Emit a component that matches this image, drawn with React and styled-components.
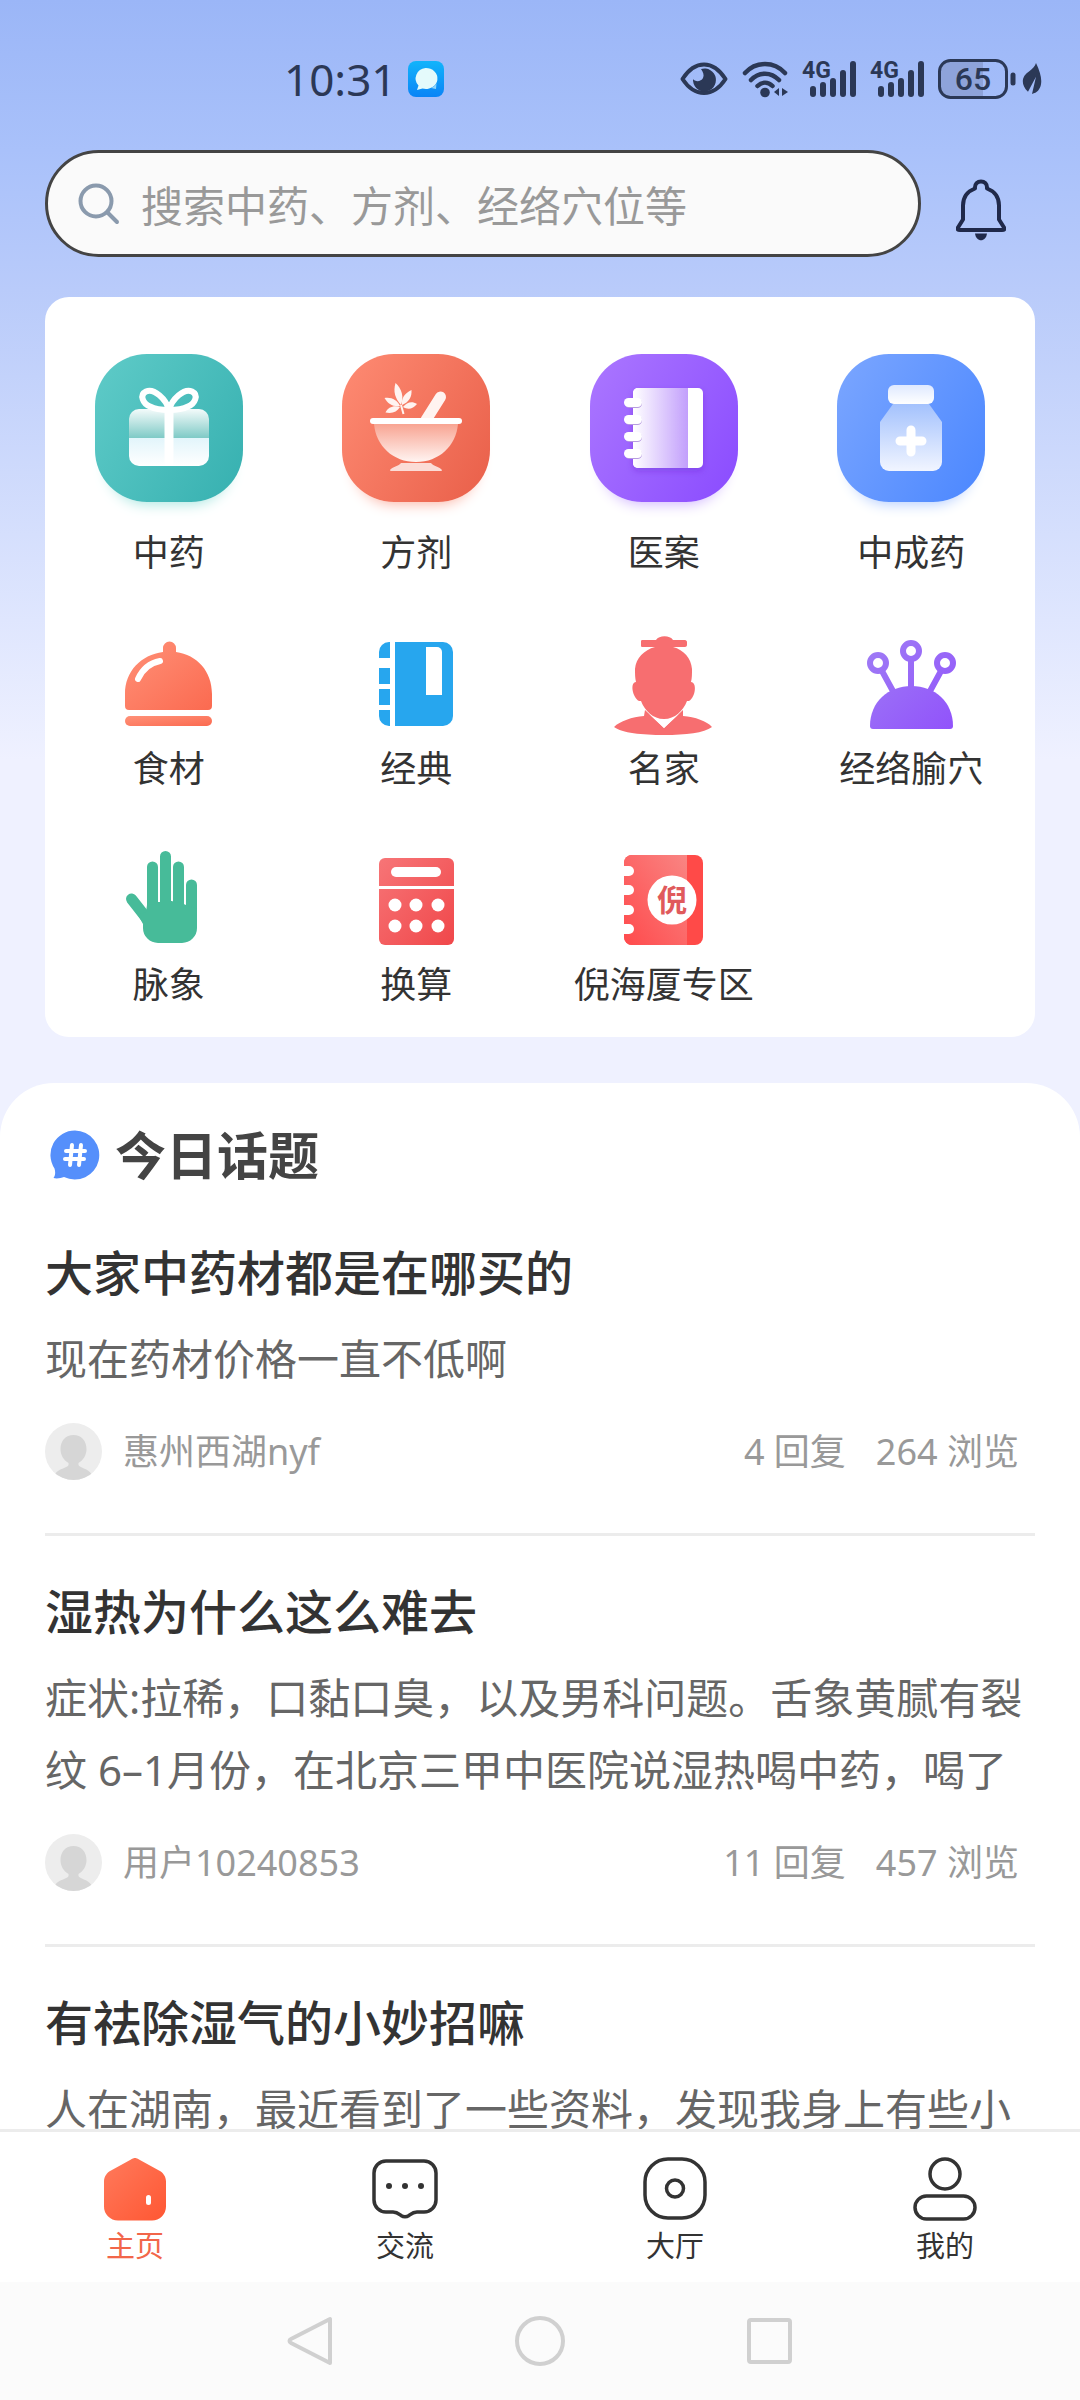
import React from 'react';
import styled, { createGlobalStyle } from 'styled-components';

const GlobalStyle = createGlobalStyle`
  * {
    box-sizing: border-box;
  }
  body {
    margin: 0;
    font-family: 'Noto Sans', 'Noto Sans CJK SC', sans-serif;
    color: #333;
  }
  a {
    color: inherit;
    text-decoration: none;
  }
  svg {
    display: block;
    flex-shrink: 0;
  }
`;

const Page = styled.div`
  height: 100vh;
  display: flex;
  flex-direction: column;
  background: linear-gradient(#9bb6f7 0, #a9c1fa 150px, #b9cbfa 290px, #dfe6fe 620px, #eff1ff 760px);
`;

const StatusBar = styled.header`
  height: 150px;
  flex-shrink: 0;
  display: flex;
  align-items: center;
  justify-content: space-between;
  padding: 8px 38px 0 284px;
  color: #2b3856;
`;

const StatusGroup = styled.div`
  display: flex;
  align-items: center;
  gap: ${({ $gap }) => $gap || '14px'};
`;

const Clock = styled.time`
  font-size: 44px;
  line-height: 48px;
`;

const Content = styled.main`
  flex: 1;
  min-height: 0;
  overflow-y: auto;
  scrollbar-width: none;
`;

const SearchRow = styled.div`
  display: flex;
  align-items: center;
  gap: 35px;
  padding: 0 74px 0 45px;
`;

const SearchBox = styled.label`
  flex: 1;
  height: 107px;
  display: flex;
  align-items: center;
  gap: 21px;
  padding: 0 30px;
  border: 3px solid #444;
  border-radius: 54px;
  background: #fafafa;
`;

const SearchInput = styled.input`
  flex: 1;
  min-width: 0;
  border: 0;
  padding: 0;
  outline: none;
  background: transparent;
  font-family: 'Noto Sans CJK SC', sans-serif;
  font-size: 42px;
  line-height: 60px;
  color: #333;
  &::placeholder {
    color: #999;
    opacity: 1;
  }
`;

const IconButton = styled.button`
  display: flex;
  border: 0;
  padding: 0;
  background: none;
  color: inherit;
`;

const BellButton = styled(IconButton)`
  padding-top: 12px;
`;

const MenuCard = styled.nav`
  margin: 40px 45px 46px;
  padding: 57px 0 28px;
  display: grid;
  grid-template-columns: repeat(4, 1fr);
  row-gap: 55px;
  border-radius: 24px;
  background: #fff;
`;

const MenuItem = styled.a`
  display: flex;
  flex-direction: column;
  align-items: center;
  gap: ${({ $large }) => ($large ? '27px' : '9px')};
  font-size: 36px;
  line-height: 48px;
  white-space: nowrap;
`;

const Tile = styled.span`
  width: 148px;
  height: 148px;
  border-radius: 52px;
  background: ${({ $bg }) => $bg};
  box-shadow: 0 14px 14px -12px ${({ $glow }) => $glow};
`;

const Sheet = styled.section`
  padding: 36px 45px 0;
  border-radius: 54px 54px 0 0;
  background: #fff;
`;

const SheetHeading = styled.h1`
  display: flex;
  align-items: center;
  gap: 14px;
  margin: 0 0 6px;
  padding-left: 4px;
  font-size: 51px;
  line-height: 72px;
  font-weight: 700;
  color: #444;
`;

const Post = styled.article`
  padding: 44px 0 53px;
  border-bottom: 3px solid #ececec;
`;

const PostTitle = styled.h2`
  margin: 0 0 18px;
  font-size: 48px;
  line-height: 64px;
  font-weight: 500;
`;

const PostBody = styled.p`
  margin: 0 0 28px;
  font-size: 42px;
  line-height: 72px;
  color: #666;
`;

const PostMeta = styled.div`
  display: flex;
  align-items: center;
  padding-right: 16px;
  font-size: 36px;
  line-height: 57px;
  color: #999;
`;

const Author = styled.span`
  flex: 1;
  margin-left: 21px;
`;

const Stat = styled.span`
  margin-left: 30px;
`;

const TabBar = styled.nav`
  position: relative;
  flex-shrink: 0;
  display: grid;
  grid-template-columns: repeat(4, 1fr);
  padding: 25px 0 16px;
  border-top: 3px solid #ececec;
  background: #fff;
`;

const Tab = styled.a`
  display: flex;
  flex-direction: column;
  align-items: center;
  gap: 5px;
  font-size: 29px;
  line-height: 40px;
  color: ${({ $active }) => ($active ? '#f2664a' : '#333')};
`;

const SystemNav = styled.footer`
  flex-shrink: 0;
  height: 118px;
  display: flex;
  align-items: center;
  justify-content: center;
  gap: 178px;
  background: #fbfbfb;
  color: #d0d0d0;
`;

/* ---------- status bar icons ---------- */

const MessageAppIcon = () => (
  <svg width="36" height="36" viewBox="0 0 36 36">
    <defs>
      <linearGradient id="msg" x1="0" y1="0" x2="0" y2="1">
        <stop offset="0" stopColor="#12b4fb" />
        <stop offset="1" stopColor="#0a84f6" />
      </linearGradient>
    </defs>
    <rect width="36" height="36" rx="8" fill="url(#msg)" />
    <path d="M17.500 7a11.500 10.500 0 1 1-3 20.500L9 29l1.500-4.500A11 10.500 0 0 1 17.500 7z" fill="#e4fafb" />
    <path d="M23 27c3-1 5-3 5.500-5L28 28z" fill="#8fd6fb" />
  </svg>
);

const EyeIcon = () => (
  <svg width="48" height="34" viewBox="0 0 48 34">
    <path
      d="M2.500 17C9 7 16 2.500 24 2.500S39 7 45.500 17C39 27 32 31 24 31S9 27 2.500 17z"
      fill="none"
      stroke="currentColor"
      strokeWidth="4"
      strokeLinejoin="round"
    />
    <path d="M21 7a11.500 11.500 0 1 1-8 10c2 3 8 3 10-1 1.500-3 0-6-2-9z" fill="currentColor" />
  </svg>
);

const WifiIcon = () => (
  <svg width="46" height="38" viewBox="0 0 46 38" fill="none" stroke="currentColor" strokeWidth="4.500" strokeLinecap="round">
    <path d="M3 13C14 1 32 1 43 13M9 20c8-8.500 20-8.500 28 0M15.500 26c4.500-4.500 10.500-4.500 15 0" />
    <circle cx="23" cy="32.500" r="4.800" fill="currentColor" stroke="none" />
    <path d="M37 28v8l-5-4zM40 28v8l6-4z" fill="currentColor" stroke="none" />
  </svg>
);

const SignalIcon = () => (
  <svg width="54" height="38" viewBox="0 0 54 38">
    <text x="0" y="18" fontFamily="Roboto, sans-serif" fontWeight="700" fontSize="23" fill="currentColor">4G</text>
    <g stroke="currentColor" strokeWidth="6" strokeLinecap="round">
      <path d="M11 29v5M21 25v9M31 21v13M41 13v21M51 4v30" />
    </g>
  </svg>
);

const BatteryIcon = () => (
  <svg width="78" height="40" viewBox="0 0 78 40">
    <path d="M12 2h33v36H12A10 10 0 0 1 2 28V12A10 10 0 0 1 12 2z" fill="#8ea3da" />
    <rect x="1.500" y="1.500" width="67" height="37" rx="11" fill="none" stroke="currentColor" strokeWidth="3" />
    <path d="M75 16v8" stroke="currentColor" strokeWidth="5" strokeLinecap="round" />
    <text x="35" y="31" textAnchor="middle" fontFamily="Roboto, sans-serif" fontWeight="500" fontSize="32" fill="currentColor">65</text>
  </svg>
);

const LeafIcon = () => (
  <svg width="20" height="32" viewBox="0 0 20 30" preserveAspectRatio="none">
    <path d="M14 0c4 8 6 14 5 20-1 5-4 8-9 9l4-16L6 27C-2 20 0 12 7 8c4-3 6-5 7-8z" fill="currentColor" />
  </svg>
);

/* ---------- search row ---------- */

const SearchIcon = () => (
  <svg width="42" height="42" viewBox="0 0 42 42" fill="none" stroke="#8a9aad" strokeWidth="4" strokeLinecap="round">
    <circle cx="18" cy="18" r="15.500" />
    <path d="M30 30l9 9" />
  </svg>
);

const BellIcon = () => (
  <svg width="50" height="62" viewBox="0 0 50 62">
    <path
      d="M19 9.500C18 0 32 0 31 9.500c8 3 12 9 12 17v14l5 8c1 2 0 2.500-2 2.500H4c-2 0-3-.500-2-2.500l5-8V26.500C7 18.500 11 12.500 19 9.500z"
      fill="none"
      stroke="#20294a"
      strokeWidth="4"
      strokeLinejoin="round"
    />
    <path d="M19 54.500h12c-1 9-11 9-12 0z" fill="#20294a" />
  </svg>
);

/* ---------- large menu tiles ---------- */

const GiftIcon = () => (
  <svg width="148" height="148" viewBox="0 0 148 148">
    <defs>
      <linearGradient id="giftTop" x1="0" y1="0" x2="0" y2="1">
        <stop offset="0" stopColor="#f4fbfb" />
        <stop offset="1" stopColor="#7fcac6" />
      </linearGradient>
      <linearGradient id="giftBottom" x1="0" y1="0" x2="0" y2="1">
        <stop offset="0" stopColor="#e2f5fb" />
        <stop offset="1" stopColor="#fff" />
      </linearGradient>
    </defs>
    <path d="M34 84V65a10 10 0 0 1 10-10h60a10 10 0 0 1 10 10v19z" fill="url(#giftTop)" />
    <path d="M34 84h80v18a10 10 0 0 1-10 10H44a10 10 0 0 1-10-10z" fill="url(#giftBottom)" />
    <path d="M74 54v58" stroke="#fff" strokeWidth="9" />
    <path
      d="M74 56C71 45 59 34 51 37.500c-7 3.500-3 12 4 15 6 3 13 3.500 19 3.500zM74 56c3-11 15-22 23-18.500 7 3.500 3 12-4 15-6 3-13 3.500-19 3.500z"
      fill="none"
      stroke="#fff"
      strokeWidth="6"
      strokeLinejoin="round"
    />
  </svg>
);

const MortarIcon = () => (
  <svg width="148" height="148" viewBox="0 0 148 148">
    <defs>
      <linearGradient id="bowl" x1="0" y1="0" x2="0" y2="1">
        <stop offset="0" stopColor="#f8a492" />
        <stop offset="1" stopColor="#fff4f1" />
      </linearGradient>
    </defs>
    <path d="M84 66l14.500-23" stroke="#fff3f0" strokeWidth="11" strokeLinecap="round" />
    <path d="M59 109h30c2 3 9 4 11 7 0 1-1 1-2 1H50c-1 0-2 0-2-1 2-3 9-4 11-7z" fill="#fbdcd6" />
    <path d="M32 70h84c-2 22-19 38-42 38S34 92 32 70z" fill="url(#bowl)" />
    <rect x="28" y="64" width="92" height="6" rx="3" fill="#fff" />
    <g fill="#fff3f0">
      <path d="M59 51c-6-7-8-13-5.500-22C60 35 62 43 59 51z" />
      <path d="M60 51c-1-7 3-12 9.500-15C70 43 67 48 60 51z" />
      <path d="M58 52c-7 1-12-2-15.500-8C50 43 55 46 58 52z" />
      <path d="M61 53c4-5 9-6 14-3-4 5-9 6-14 3z" />
      <path d="M58 53c-3 5-8 7-14.500 5.500C46 53 52 51 58 53z" />
      <path d="M59 51l2.500 9" stroke="#fff3f0" strokeWidth="2" />
    </g>
  </svg>
);

const NotebookIcon = () => (
  <svg width="148" height="148" viewBox="0 0 148 148">
    <defs>
      <linearGradient id="note">
        <stop offset="0" stopColor="#fff" />
        <stop offset="1" stopColor="#c29ffc" />
      </linearGradient>
      <filter id="noteShadow" x="-20%" y="-20%" width="140%" height="150%">
        <feDropShadow dx="0" dy="3" stdDeviation="3" floodColor="#5a1fc0" floodOpacity="0.300" />
      </filter>
    </defs>
    <g filter="url(#noteShadow)">
      <rect x="43" y="34" width="70" height="80" rx="5" fill="#fff" />
      <path d="M48 34h50v80H48a5 5 0 0 1-5-5V39a5 5 0 0 1 5-5z" fill="url(#note)" />
    </g>
    {[48, 65, 82, 99].map((y) => (
      <g key={y}>
        <rect x="35" y={y - 3} width="17" height="9" rx="4.500" fill="#b79be0" />
        <rect x="34" y={y - 4} width="18" height="9" rx="4.500" fill="#fff" />
      </g>
    ))}
  </svg>
);

const BottleIcon = () => (
  <svg width="148" height="148" viewBox="0 0 148 148">
    <defs>
      <linearGradient id="cap" x1="0" y1="0" x2="0" y2="1">
        <stop offset="0" stopColor="#dfe9ff" />
        <stop offset="1" stopColor="#fff" />
      </linearGradient>
      <linearGradient id="bottle" x1="0" y1="0" x2="0" y2="1">
        <stop offset="0" stopColor="#a4c2fd" />
        <stop offset="1" stopColor="#f1f5ff" />
      </linearGradient>
    </defs>
    <path d="M56 50h36l13 18v40a9 9 0 0 1-9 9H52a9 9 0 0 1-9-9V68z" fill="url(#bottle)" />
    <rect x="51" y="31" width="46" height="19" rx="6" fill="url(#cap)" />
    <path d="M74 76v22M63 87h22" stroke="#fff" strokeWidth="9" strokeLinecap="round" />
  </svg>
);

/* ---------- small menu icons ---------- */

const DishIcon = () => (
  <svg width="104" height="104" viewBox="0 0 104 104">
    <defs>
      <linearGradient id="dish" x1="0" y1="0" x2="1" y2="1">
        <stop offset="0" stopColor="#ff9178" />
        <stop offset="1" stopColor="#fb6a50" />
      </linearGradient>
    </defs>
    <g fill="url(#dish)">
      <path d="M46 20v-4a6.500 6.500 0 0 1 13 0v4c21 3 36 19 36 42v12a4 4 0 0 1-4 4H12a4 4 0 0 1-4-4V62c0-23 16-39 38-42z" />
      <rect x="8" y="84" width="87" height="10" rx="5" />
    </g>
    <path d="M21 47c4-9 12-16 22-18" fill="none" stroke="#fff" strokeWidth="6" strokeLinecap="round" />
  </svg>
);

const ClassicsIcon = () => (
  <svg width="104" height="104" viewBox="0 0 104 104" fill="#27a6ee">
    <path d="M26 10v16H15v-6a10 10 0 0 1 10-10zM15 36h11v16H15zM15 57h11v16H15zM15 78h11v16h-1a10 10 0 0 1-10-10z" />
    <path d="M31 10h48a10 10 0 0 1 10 10v64a10 10 0 0 1-10 10H31z" />
    <path d="M62 15h11a5 5 0 0 1 5 5v43H62z" fill="#fff" />
  </svg>
);

const MasterIcon = () => (
  <svg width="104" height="104" viewBox="0 0 104 104" fill="#f76e70">
    <path d="M30 8h14c3-5 14-5 17 0h12c1 0 2 1 2 2v3c0 1-1 2-2 2H61c11 3 18 11 19 22 0 5 0 9-1 13 6 0 5 15-2 19h-2c-4 10-12 18-23 18S33 79 29 69h-2c-7-4-9-19-3-19-1-4-1-8-1-13 1-11 9-19 20-22H30c-1 0-1-1-1-2v-3c0-1 0-2 1-2z" />
    <path d="M33 78l19 18 19-18v6c12 1 24 5 29 11-8 6-26 8-48 8S10 101 2 95c6-6 18-10 30-11z" />
    <path d="M35 80l17 16 17-16c-5 5-10 8-17 8s-12-3-17-8z" fill="#fff" />
  </svg>
);

const NeedlesIcon = () => (
  <svg width="104" height="104" viewBox="0 0 104 104">
    <defs>
      <linearGradient id="pin" gradientUnits="userSpaceOnUse" x1="10" y1="10" x2="94" y2="98">
        <stop offset="0" stopColor="#9f7cf5" />
        <stop offset="1" stopColor="#9152fb" />
      </linearGradient>
    </defs>
    <g fill="none" stroke="url(#pin)" strokeWidth="6">
      <circle cx="19" cy="31" r="8" />
      <circle cx="52" cy="19" r="8" />
      <circle cx="86" cy="31" r="8" />
      <path d="M23 39l12 22M82 39L70 61" />
    </g>
    <rect x="49" y="27" width="6" height="30" fill="url(#pin)" />
    <path d="M11 94c0-24 18-40 41.500-40S94 70 94 94c0 2-1 3-3 3H14c-2 0-3-1-3-3z" fill="url(#pin)" />
  </svg>
);

const HandIcon = () => (
  <svg width="104" height="104" viewBox="0 0 104 104">
    <g stroke="#47bb99" strokeWidth="11" strokeLinecap="round">
      <path d="M35.500 19v42M48.500 8.500v52M61.500 19v42M74.500 37v30M14.500 51l18 23" />
    </g>
    <path d="M30 57c8 0 10-3 12-4h13c2 1 10 2 14 4l11 4v19a15 15 0 0 1-15 15H41a15 15 0 0 1-15-15v-4l-5-9 8-3z" fill="#47bb99" />
    <path d="M42 38v16M55 38v15M68 42v14" stroke="#fff" strokeWidth="2" />
  </svg>
);

const CalculatorIcon = () => (
  <svg width="104" height="104" viewBox="0 0 104 104">
    <defs>
      <linearGradient id="calc" x1="0" y1="0" x2="1" y2="1">
        <stop offset="0" stopColor="#f77577" />
        <stop offset="1" stopColor="#f0474a" />
      </linearGradient>
    </defs>
    <rect x="15" y="10" width="75" height="87" rx="6" fill="url(#calc)" />
    <g fill="#fff">
      <rect x="15" y="38" width="75" height="3" />
      <rect x="27" y="19" width="50" height="10" rx="5" />
      {[57, 78].map((y) => [31, 52, 74].map((x) => <circle key={`${x}-${y}`} cx={x} cy={y} r="6.500" />))}
    </g>
  </svg>
);

const NiBookIcon = () => (
  <svg width="104" height="104" viewBox="0 0 104 104">
    <defs>
      <linearGradient id="ni" x1="0" y1="1" x2="1" y2="0">
        <stop offset="0" stopColor="#ff4a4c" />
        <stop offset="1" stopColor="#f98583" />
      </linearGradient>
    </defs>
    <rect x="12" y="7" width="79" height="90" rx="8" fill="#ff4a48" />
    <path d="M20 7h55v90H20a8 8 0 0 1-8-8V15a8 8 0 0 1 8-8z" fill="url(#ni)" />
    <g fill="#fff">
      {[23, 42, 62, 81].map((y) => (
        <path key={y} d={`M10 ${y - 5}h7a5 5 0 0 1 0 10h-7z`} />
      ))}
      <circle cx="60" cy="52" r="24.500" />
    </g>
    <text x="60" y="63" textAnchor="middle" fontSize="30" fontWeight="700" fill="#e05a5c">倪</text>
  </svg>
);

/* ---------- posts ---------- */

const TopicIcon = () => (
  <svg width="52" height="52" viewBox="0 0 52 52">
    <path d="M26 1.500a24.500 24.500 0 1 1-11 46.500c-3 1-7 2-10.500 1 2-3 2-6 1-9.500A24.500 24.500 0 0 1 26 1.500z" fill="#558ffb" />
    <path d="M23 16l-2 20M32 16l-2 20M17 22h19M16 30h19" stroke="#fff" strokeWidth="4" strokeLinecap="round" />
  </svg>
);

const Avatar = () => (
  <svg width="57" height="57" viewBox="0 0 57 57">
    <defs>
      <clipPath id="avatar">
        <circle cx="28.500" cy="28.500" r="28.500" />
      </clipPath>
    </defs>
    <g clipPath="url(#avatar)">
      <rect width="57" height="57" fill="#ededed" />
      <path d="M28.500 12c8 0 13 6 13 14 0 6-3 11-8 14v2c1 3 9 3 13 9v8H10v-8c4-6 13-6 13.500-9v-2c-5-3-8-8-8-14 0-8 5-14 13-14z" fill="#d6d6d6" />
    </g>
  </svg>
);

/* ---------- tab bar ---------- */

const HomeIcon = () => (
  <svg width="64" height="64" viewBox="0 0 64 64">
    <defs>
      <linearGradient id="home" x1="0" y1="0" x2="1" y2="1">
        <stop offset="0" stopColor="#ff7a5c" />
        <stop offset="1" stopColor="#ff5733" />
      </linearGradient>
    </defs>
    <path d="M28 2.500c3-2 5-2 8 0l20 11c4 2 7 6 7 11v25a14 14 0 0 1-14 14H15A14 14 0 0 1 1 49V24.500c0-5 3-9 7-11z" fill="url(#home)" />
    <rect x="43" y="38" width="5" height="10" rx="2.500" fill="#fff" />
  </svg>
);

const ChatIcon = () => (
  <svg width="66" height="64" viewBox="0 0 66 64">
    <path
      d="M14 4h38a12 12 0 0 1 12 12v27a12 12 0 0 1-12 12h-7c-4 0-6 2-8 3.500-3 2-5 2-8 0C27 57 25 55 21 55h-7A12 12 0 0 1 2 43V16A12 12 0 0 1 14 4z"
      fill="none"
      stroke="currentColor"
      strokeWidth="3.500"
    />
    <circle cx="17" cy="29" r="3" fill="currentColor" />
    <circle cx="33" cy="29" r="3" fill="currentColor" />
    <circle cx="49" cy="29" r="3" fill="currentColor" />
  </svg>
);

const HallIcon = () => (
  <svg width="64" height="64" viewBox="0 0 64 64" fill="none" stroke="currentColor" strokeWidth="3.500">
    <rect x="2" y="2" width="60" height="59" rx="23" />
    <circle cx="32" cy="31.500" r="8.500" />
  </svg>
);

const MineIcon = () => (
  <svg width="64" height="64" viewBox="0 0 64 64" fill="none" stroke="currentColor" strokeWidth="3.500">
    <circle cx="32" cy="17" r="15" />
    <rect x="2" y="39" width="60" height="23" rx="11.500" />
  </svg>
);

const BackIcon = () => (
  <svg width="52" height="52" viewBox="0 0 52 52" fill="none" stroke="currentColor" strokeWidth="4" strokeLinejoin="round">
    <path d="M46 4v44L7 28c-2-1-2-3 0-4z" />
  </svg>
);

const CircleIcon = () => (
  <svg width="52" height="52" viewBox="0 0 52 52" fill="none" stroke="currentColor" strokeWidth="4">
    <circle cx="26" cy="26" r="23" />
  </svg>
);

const SquareIcon = () => (
  <svg width="52" height="52" viewBox="0 0 52 52" fill="none" stroke="currentColor" strokeWidth="4">
    <rect x="5" y="5" width="41" height="42" rx="2" />
  </svg>
);

const tiles = [
  { label: '中药', icon: GiftIcon, bg: 'linear-gradient(120deg, #5fcbc8, #36b0b0)', glow: '#a9e6e0' },
  { label: '方剂', icon: MortarIcon, bg: 'linear-gradient(120deg, #fe8b73, #e95f49)', glow: '#fbb5a6' },
  { label: '医案', icon: NotebookIcon, bg: 'linear-gradient(120deg, #ab77ff, #8a4bff)', glow: '#d0b5ff' },
  { label: '中成药', icon: BottleIcon, bg: 'linear-gradient(120deg, #7ba6ff, #4b87ff)', glow: '#b3cdff' },
];

const shortcuts = [
  { label: '食材', icon: DishIcon },
  { label: '经典', icon: ClassicsIcon },
  { label: '名家', icon: MasterIcon },
  { label: '经络腧穴', icon: NeedlesIcon },
  { label: '脉象', icon: HandIcon },
  { label: '换算', icon: CalculatorIcon },
  { label: '倪海厦专区', icon: NiBookIcon },
];

const posts = [
  {
    title: '大家中药材都是在哪买的',
    body: '现在药材价格一直不低啊',
    author: '惠州西湖nyf',
    replies: 4,
    views: 264,
  },
  {
    title: '湿热为什么这么难去',
    body: '症状:拉稀，口黏口臭，以及男科问题。舌象黄腻有裂纹 6–1月份，在北京三甲中医院说湿热喝中药，喝了',
    author: '用户10240853',
    replies: 11,
    views: 457,
  },
  {
    title: '有祛除湿气的小妙招嘛',
    body: '人在湖南，最近看到了一些资料，发现我身上有些小',
  },
];

const tabs = [
  { label: '主页', icon: HomeIcon, active: true },
  { label: '交流', icon: ChatIcon },
  { label: '大厅', icon: HallIcon },
  { label: '我的', icon: MineIcon },
];

const App = () => {
  return (
    <Page>
      <GlobalStyle />
      <StatusBar>
        <StatusGroup $gap="12px">
          <Clock>10:31</Clock>
          <MessageAppIcon />
        </StatusGroup>
        <StatusGroup>
          <EyeIcon />
          <WifiIcon />
          <SignalIcon />
          <SignalIcon />
          <StatusGroup $gap="6px">
            <BatteryIcon />
            <LeafIcon />
          </StatusGroup>
        </StatusGroup>
      </StatusBar>

      <Content>
        <SearchRow>
          <SearchBox>
            <SearchIcon />
            <SearchInput type="text" aria-label="搜索" placeholder="搜索中药、方剂、经络穴位等" />
          </SearchBox>
          <BellButton type="button" aria-label="通知">
            <BellIcon />
          </BellButton>
        </SearchRow>

        <MenuCard>
          {tiles.map(({ label, icon: Icon, bg, glow }) => (
            <MenuItem key={label} href="#" $large>
              <Tile $bg={bg} $glow={glow}>
                <Icon />
              </Tile>
              {label}
            </MenuItem>
          ))}
          {shortcuts.map(({ label, icon: Icon }) => (
            <MenuItem key={label} href="#">
              <Icon />
              {label}
            </MenuItem>
          ))}
        </MenuCard>

        <Sheet>
          <SheetHeading>
            <TopicIcon />
            今日话题
          </SheetHeading>
          {posts.map(({ title, body, author, replies, views }) => (
            <Post key={title}>
              <PostTitle>{title}</PostTitle>
              <PostBody>{body}</PostBody>
              {author && (
                <PostMeta>
                  <Avatar />
                  <Author>{author}</Author>
                  <Stat>{replies} 回复</Stat>
                  <Stat>{views} 浏览</Stat>
                </PostMeta>
              )}
            </Post>
          ))}
        </Sheet>
      </Content>

      <TabBar>
        {tabs.map(({ label, icon: Icon, active }) => (
          <Tab key={label} href="#" $active={active}>
            <Icon />
            {label}
          </Tab>
        ))}
      </TabBar>

      <SystemNav>
        <IconButton type="button" aria-label="返回">
          <BackIcon />
        </IconButton>
        <IconButton type="button" aria-label="主屏幕">
          <CircleIcon />
        </IconButton>
        <IconButton type="button" aria-label="多任务">
          <SquareIcon />
        </IconButton>
      </SystemNav>
    </Page>
  );
};

export default App;
